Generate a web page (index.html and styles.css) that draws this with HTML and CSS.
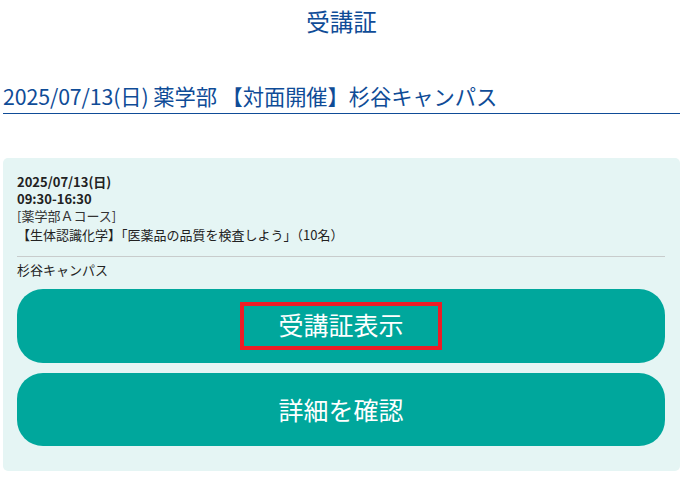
FILE: index.html
```html
<!DOCTYPE html>
<html lang="ja">
<head>
<meta charset="utf-8">
<link rel="stylesheet" href="styles.css">
</head>
<body>
<div class="page">
  <h1 class="title">受講証</h1>
  <h2 class="event">2025/07/13(日) 薬学部 【対面開催】杉谷キャンパス</h2>
  <section class="card">
    <div class="info">
      <div class="strong">2025/07/13(日)</div>
      <div class="strong">09:30-16:30</div>
      <div class="course">[薬学部Ａコース]</div>
      <div class="lesson">【生体認識化学】「医薬品の品質を検査しよう」（10名）</div>
    </div>
    <div class="place">杉谷キャンパス</div>
    <div class="actions">
      <a class="btn"><span class="hl">受講証表示</span></a>
      <a class="btn">詳細を確認</a>
    </div>
  </section>
</div>
</body>
</html>
```
FILE: styles.css
```css
* { box-sizing: border-box; }
html, body { margin: 0; padding: 0; background: #fff; }
body {
  font-family: "Noto Sans CJK JP", "Noto Sans", sans-serif;
  color: #222;
}
.page { padding: 0 3px; }
.title {
  margin: 0;
  padding-top: 4px;
  height: 81px;
  text-align: center;
  font-size: 23.5px;
  font-weight: 400;
  line-height: 34px;
  color: #0f4c97;
}
.event {
  margin: 0;
  font-size: 21.3px;
  font-weight: 400;
  line-height: 30px;
  color: #0f4c97;
  border-bottom: 1px solid #0f4c97;
  padding-bottom: 2px;
  letter-spacing: -0.1px;
}
.card {
  margin-top: 44px;
  background: #e5f5f4;
  border-radius: 5px;
  padding: 15px 15px 25px 14px;
  font-size: 13px;
  line-height: 17px;
}
.info { padding-bottom: 13px; border-bottom: 1px solid #c8cccc; }
.strong { font-weight: 700; }
.course { color: #333; }
.lesson { margin-top: 2px; }
.place { padding-top: 4px; height: 32px; }
.actions { display: flex; flex-direction: column; gap: 10px; }
.btn {
  display: flex;
  align-items: center;
  justify-content: center;
  height: 73.5px;
  border-radius: 26px;
  background: #00a79c;
  color: #fff;
  font-size: 25px;
  text-decoration: none;
}
.hl {
  display: flex;
  align-items: center;
  justify-content: center;
  width: 202px;
  height: 48px;
  border: 4px solid #ee1c25;
  padding-bottom: 2px;
}
```
